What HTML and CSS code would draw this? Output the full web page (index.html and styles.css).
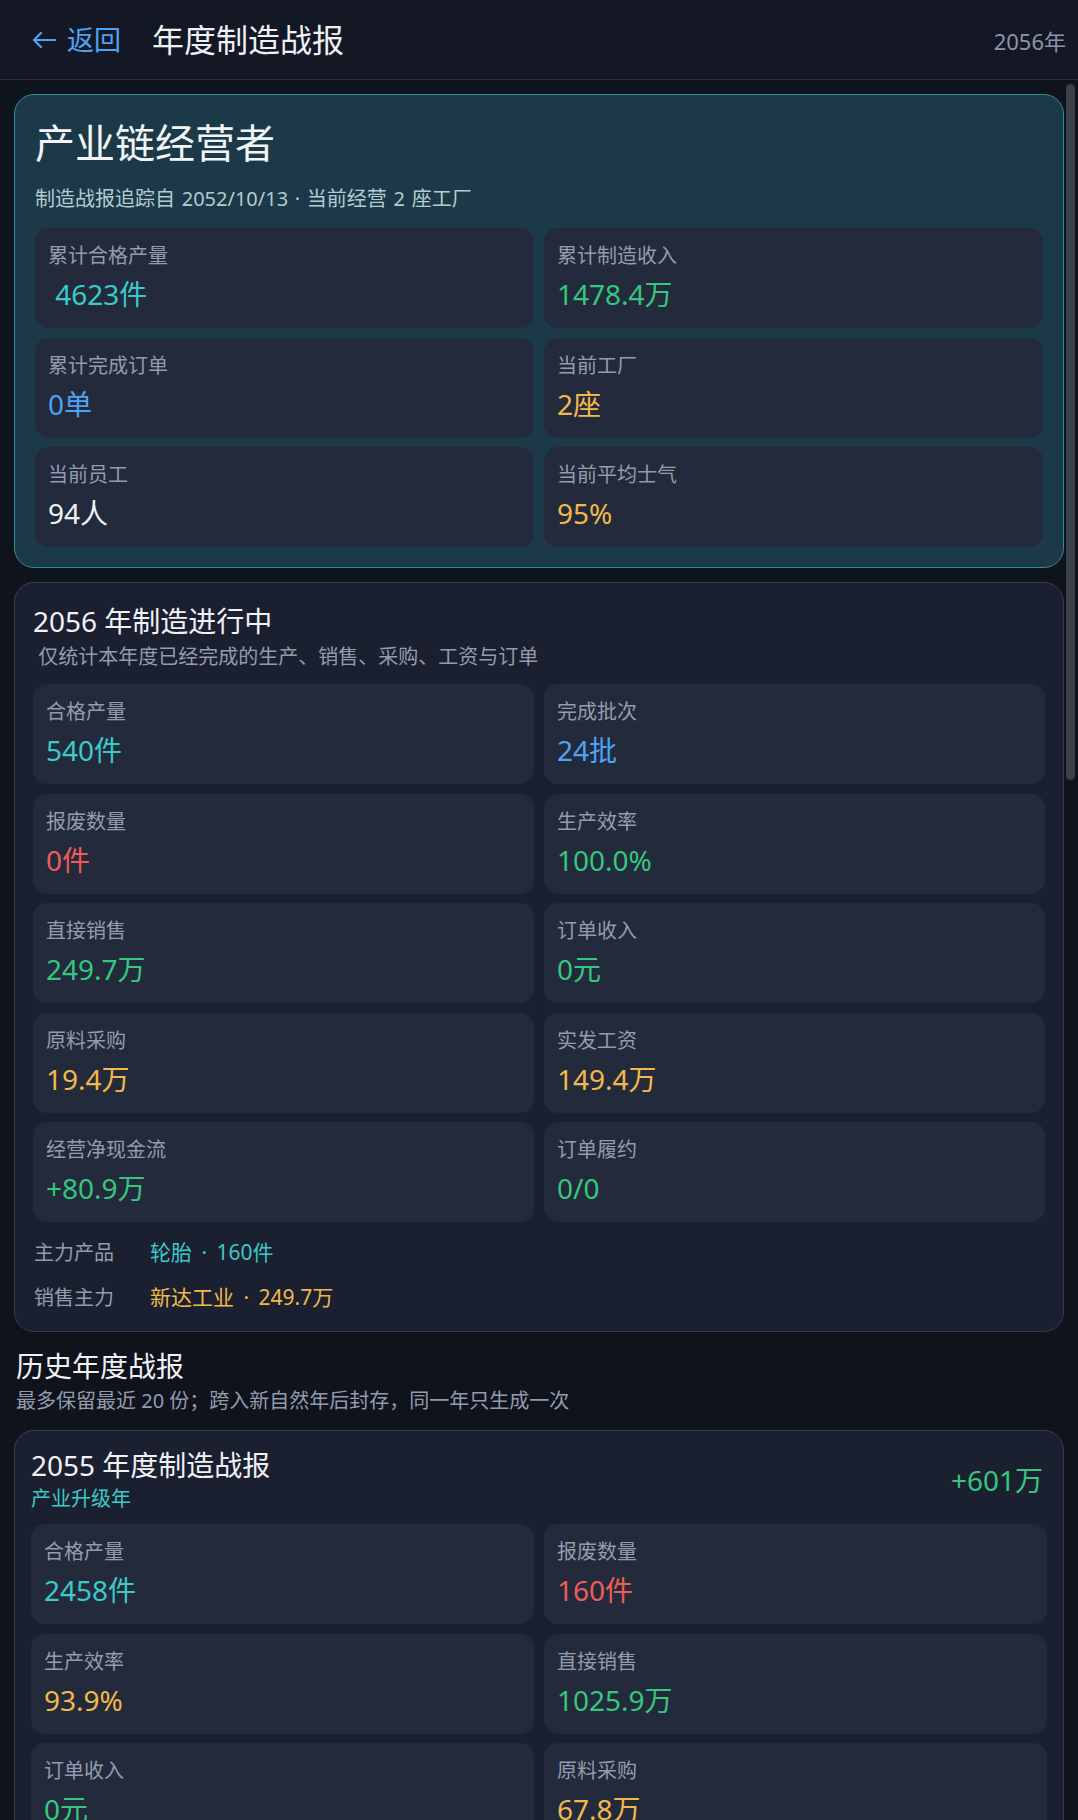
FILE: index.html
```html
<!DOCTYPE html>
<html lang="zh-CN">
<head>
<meta charset="utf-8">
<title>年度制造战报</title>
<link rel="stylesheet" href="styles.css">
</head>
<body>
<header class="topbar">
  <a class="back" href="#">
    <svg class="back-icon" viewBox="0 0 24 16" width="24" height="16" aria-hidden="true">
      <path d="M23 8H2M9 1L2 8l7 7" fill="none" stroke="currentColor" stroke-width="2.2" stroke-linecap="round" stroke-linejoin="round"/>
    </svg>
    <span>返回</span>
  </a>
  <h1 class="page-title">年度制造战报</h1>
  <span class="top-year">2056年</span>
</header>

<main class="content">
  <section class="card hero">
    <h2 class="hero-title">产业链经营者</h2>
    <p class="hero-sub">制造战报追踪自 2052/10/13 · 当前经营 2 座工厂</p>
    <div class="grid">
      <div class="tile"><div class="label">累计合格产量</div><div class="value teal">&nbsp;4623件</div></div>
      <div class="tile"><div class="label">累计制造收入</div><div class="value green">1478.4万</div></div>
      <div class="tile"><div class="label">累计完成订单</div><div class="value blue">0单</div></div>
      <div class="tile"><div class="label">当前工厂</div><div class="value yellow">2座</div></div>
      <div class="tile"><div class="label">当前员工</div><div class="value white">94人</div></div>
      <div class="tile"><div class="label">当前平均士气</div><div class="value yellow">95%</div></div>
    </div>
  </section>

  <section class="card current">
    <h2 class="card-title">2056 年制造进行中</h2>
    <p class="card-sub">&nbsp;仅统计本年度已经完成的生产、销售、采购、工资与订单</p>
    <div class="grid">
      <div class="tile"><div class="label">合格产量</div><div class="value teal">540件</div></div>
      <div class="tile"><div class="label">完成批次</div><div class="value blue">24批</div></div>
      <div class="tile"><div class="label">报废数量</div><div class="value red">0件</div></div>
      <div class="tile"><div class="label">生产效率</div><div class="value green">100.0%</div></div>
      <div class="tile"><div class="label">直接销售</div><div class="value green">249.7万</div></div>
      <div class="tile"><div class="label">订单收入</div><div class="value green">0元</div></div>
      <div class="tile"><div class="label">原料采购</div><div class="value yellow">19.4万</div></div>
      <div class="tile"><div class="label">实发工资</div><div class="value yellow">149.4万</div></div>
      <div class="tile"><div class="label">经营净现金流</div><div class="value green">+80.9万</div></div>
      <div class="tile"><div class="label">订单履约</div><div class="value green">0/0</div></div>
    </div>
    <dl class="facts">
      <dt>主力产品</dt><dd class="teal">轮胎 · 160件</dd>
      <dt>销售主力</dt><dd class="yellow">新达工业 · 249.7万</dd>
    </dl>
  </section>

  <section class="history">
    <h2 class="history-title">历史年度战报</h2>
    <p class="history-sub">最多保留最近 20 份；跨入新自然年后封存，同一年只生成一次</p>

    <article class="card report">
      <div class="report-head">
        <div>
          <h3 class="card-title">2055 年度制造战报</h3>
          <p class="report-tag">产业升级年</p>
        </div>
        <span class="report-total">+601万</span>
      </div>
      <div class="grid">
        <div class="tile"><div class="label">合格产量</div><div class="value teal">2458件</div></div>
        <div class="tile"><div class="label">报废数量</div><div class="value red">160件</div></div>
        <div class="tile"><div class="label">生产效率</div><div class="value yellow">93.9%</div></div>
        <div class="tile"><div class="label">直接销售</div><div class="value green">1025.9万</div></div>
        <div class="tile"><div class="label">订单收入</div><div class="value green">0元</div></div>
        <div class="tile"><div class="label">原料采购</div><div class="value yellow">67.8万</div></div>
      </div>
    </article>
  </section>
</main>

<div class="scrollbar" aria-hidden="true"></div>
</body>
</html>
```

FILE: styles.css
```css
* { box-sizing: border-box; }

html, body {
  margin: 0;
  padding: 0;
}

body {
  width: 1078px;
  height: 1820px;
  overflow: hidden;
  background: #0f131c;
  color: #e8ecf2;
  font-family: "Noto Sans", "Noto Sans CJK SC", sans-serif;
}

h1, h2, h3, p, dl, dd, dt { margin: 0; font-weight: 400; }

.topbar {
  height: 80px;
  display: flex;
  align-items: center;
  padding: 0 12px 0 32px;
  background: #141824;
  border-bottom: 1px solid #2a3040;
}

.back {
  display: flex;
  align-items: center;
  gap: 11px;
  color: #4ea3f5;
  text-decoration: none;
  font-size: 27px;
  line-height: 36px;
}

.back-icon { display: block; }

.page-title {
  margin-left: 31px;
  font-size: 32px;
  line-height: 40px;
  color: #eef1f5;
}

.top-year {
  margin-left: auto;
  font-size: 22px;
  color: #8c96a8;
}

.content {
  padding: 14px 14px 40px;
}

.card {
  border-radius: 20px;
  background: #1b2030;
  border: 1px solid #343c52;
}

.hero {
  background: #1c3947;
  border: 1.5px solid #2a8f93;
  padding: 20px 20px 20px;
}

.hero-title {
  font-size: 40px;
  line-height: 56px;
  color: #f2f5f7;
}

.hero-sub {
  margin-top: 14px;
  font-size: 20px;
  line-height: 28px;
  word-spacing: 1.5px;
  color: #b3cbd2;
}

.grid {
  display: grid;
  grid-template-columns: 1fr 1fr;
  column-gap: 10px;
  row-gap: 9.5px;
}

.hero .grid { margin-top: 15px; }

.tile {
  height: 100px;
  border-radius: 14px;
  background: #232a3b;
  padding: 14px 13px 12px;
}

.label {
  font-size: 20px;
  line-height: 28px;
  color: #939cae;
}

.value {
  margin-top: 4px;
  font-size: 28px;
  line-height: 40px;
}

.teal { color: #3cc9c9; }
.green { color: #35c77e; }
.blue { color: #4ea3f5; }
.yellow { color: #f2b84b; }
.red { color: #ef5b5b; }
.white { color: #f0f2f5; }

.current {
  margin-top: 14px;
  padding: 18px 18px 11px;
}

.card-title {
  font-size: 28px;
  line-height: 40px;
  color: #f0f2f6;
}

.card-sub {
  margin-top: 2px;
  font-size: 20px;
  line-height: 28px;
  color: #939cae;
}

.current .grid { margin-top: 13px; }

.facts {
  margin-top: 8px;
  display: grid;
  grid-template-columns: 117px 1fr;
  font-size: 20px;
  line-height: 45px;
}

.facts dt { color: #939cae; padding-left: 1px; }

.facts dd {
  font-size: 21px;
  word-spacing: 4px;
}

.history { margin-top: 16px; }

.history-title {
  padding-left: 2px;
  font-size: 28px;
  line-height: 36px;
  color: #f0f2f6;
}

.history-sub {
  margin-top: 3px;
  padding-left: 2px;
  font-size: 20px;
  line-height: 28px;
  color: #939cae;
}

.report {
  margin-top: 15px;
  padding: 16px;
}

.report-head {
  display: flex;
  align-items: center;
  justify-content: space-between;
  padding-right: 4px;
}

.report .card-title { line-height: 36px; }

.report-tag {
  margin-top: 2px;
  font-size: 20px;
  line-height: 28px;
  color: #3cc9c9;
}

.report-total {
  font-size: 28px;
  line-height: 40px;
  color: #35c77e;
}

.report .grid { margin-top: 11px; }

.scrollbar {
  position: fixed;
  top: 84px;
  right: 3px;
  width: 9px;
  height: 696px;
  border-radius: 5px;
  background: #3b3f49;
}
```
